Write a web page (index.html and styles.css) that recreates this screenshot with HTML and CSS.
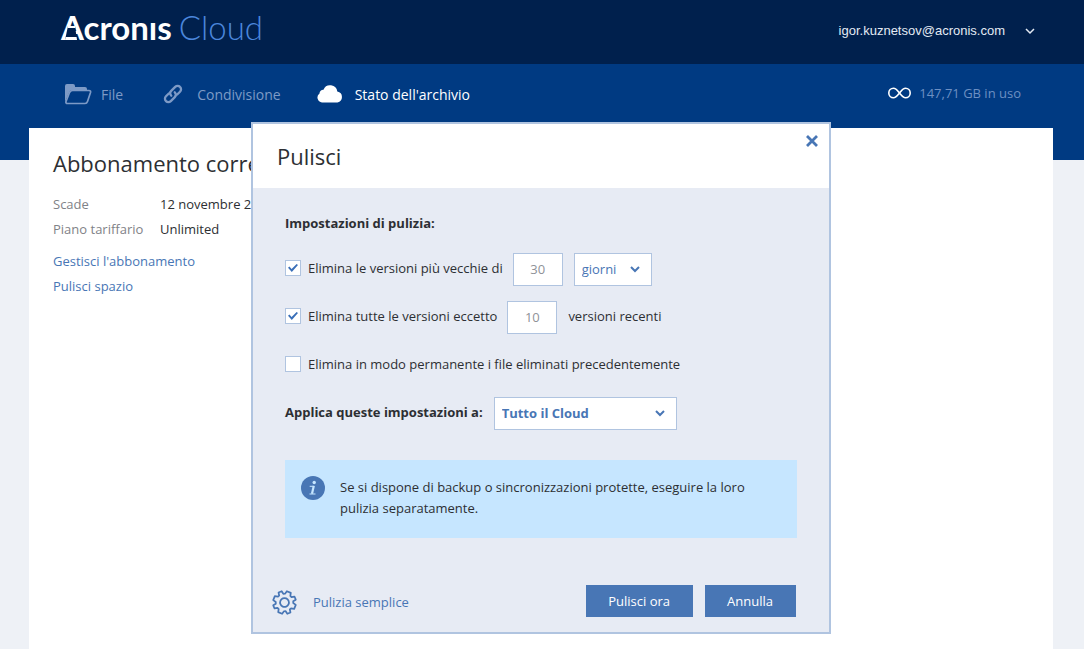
FILE: index.html
```
<!DOCTYPE html>
<html lang="it">
<head>
<meta charset="utf-8">
<meta name="viewport" content="width=device-width, initial-scale=1">
<title>Acronis Cloud</title>
<link rel="stylesheet" href="styles.css">
</head>
<body>
<header class="topbar">
  <div class="logo"><span class="logo-name">Acronıs</span><span class="logo-product">Cloud</span></div>
  <button class="account" type="button">
    <span>igor.kuznetsov@acronis.com</span>
    <svg class="chevron" width="10" height="7" viewBox="0 0 10 7"><path d="M1 1l4 4 4-4"/></svg>
  </button>
</header>

<div class="navband">
  <nav class="nav">
    <a class="nav-item nav-file" href="#">
      <svg width="27" height="21" viewBox="0 0 27 21"><path fill="currentColor" d="M0 18V2Q0 0 2 0H8Q10 0 10 2V3H20Q22 3 22 5V6H7Q5 6 4.300 8Z"/><path fill="none" stroke="currentColor" stroke-width="1.700" stroke-linejoin="round" d="M7.500 6.500H24Q26 6.500 25.500 8.500L22.500 17.500Q21.800 19.500 20 19.500H2.500Q.5 19.500 1 17.500L4.500 8.500Q5.500 6.500 7.500 6.500Z"/></svg>
      <span>File</span>
    </a>
    <a class="nav-item nav-share" href="#">
      <svg width="20" height="20" viewBox="0 0 20 20"><g fill="none" stroke="currentColor" stroke-width="2.300" stroke-linecap="round"><path d="M8.300 11.700C6.800 10.200 6.900 8.200 8.200 6.900L12.200 2.900C13.600 1.500 15.700 1.500 17 2.900C18.400 4.200 18.400 6.300 17 7.700L14.200 10.500"/><path d="M11.700 8.300C13.200 9.800 13.100 11.800 11.800 13.100L7.800 17.100C6.400 18.500 4.300 18.500 3 17.100C1.600 15.800 1.600 13.700 3 12.300L5.800 9.500"/></g></svg>
      <span>Condivisione</span>
    </a>
    <a class="nav-item nav-status active" href="#" aria-current="page">
      <svg width="26" height="18" viewBox="0 0 26 18"><path fill="currentColor" d="M5 17.500A5 5 0 0 1 2.500 8.500A3.800 3.800 0 0 1 6.500 4.700A7.200 7.200 0 0 1 20.300 6.500A5.600 5.600 0 0 1 20.500 17.500Z"/></svg>
      <span>Stato dell'archivio</span>
    </a>
  </nav>
  <div class="usage">
    <svg width="23" height="12" viewBox="0 0 23 12"><path fill="none" stroke="#fff" stroke-width="1.600" d="M11.500 6C9.500 3.500 8.200 1.200 5.500 1.200A4.700 4.800 0 0 0 5.500 10.800C8.200 10.800 9.500 8.500 11.500 6S14.800 1.200 17.500 1.200A4.700 4.800 0 0 1 17.500 10.800C14.800 10.800 13.500 8.500 11.500 6Z"/></svg>
    <span>147,71 GB in uso</span>
  </div>
</div>

<main class="content">
  <h1 class="title">Abbonamento corrente</h1>
  <dl class="details">
    <dt>Scade</dt><dd>12 novembre 2016</dd>
    <dt>Piano tariffario</dt><dd>Unlimited</dd>
  </dl>
  <a class="link" href="#">Gestisci l'abbonamento</a>
  <a class="link" href="#">Pulisci spazio</a>
</main>

<div class="overlay">
  <form class="dialog" role="dialog" aria-labelledby="dialog-title">
    <div class="dialog-head">
      <h2 class="title" id="dialog-title">Pulisci</h2>
      <button class="close" type="button" aria-label="Chiudi">
        <svg width="12" height="12" viewBox="0 0 12 12"><path fill="none" stroke="#4876b5" stroke-width="2.800" d="M1 1l10 10M11 1L1 11"/></svg>
      </button>
    </div>
    <div class="dialog-body">
      <h3 class="subtitle">Impostazioni di pulizia:</h3>
      <div class="rows">
        <div class="row">
          <input class="check" type="checkbox" id="older" checked>
          <label class="row-label" for="older">Elimina le versioni più vecchie di</label>
          <input class="number" type="text" value="30" aria-label="Numero di giorni">
          <div class="select unit">
            <select aria-label="Unità di tempo"><option>giorni</option></select>
            <svg class="chevron" width="10" height="7" viewBox="0 0 10 7"><path d="M1 1l4 4 4-4"/></svg>
          </div>
        </div>
        <div class="row">
          <input class="check" type="checkbox" id="except" checked>
          <label class="row-label" for="except">Elimina tutte le versioni eccetto</label>
          <input class="number" type="text" value="10" id="recent" aria-label="Numero di versioni">
          <label class="row-label" for="recent">versioni recenti</label>
        </div>
        <div class="row">
          <input class="check" type="checkbox" id="permanent">
          <label class="row-label" for="permanent">Elimina in modo permanente i file eliminati precedentemente</label>
        </div>
        <div class="row">
          <label class="row-label strong" for="scope">Applica queste impostazioni a:</label>
          <div class="select scope">
            <select id="scope"><option>Tutto il Cloud</option></select>
            <svg class="chevron" width="10" height="7" viewBox="0 0 10 7"><path d="M1 1l4 4 4-4"/></svg>
          </div>
        </div>
      </div>
      <div class="info">
        <svg width="24" height="24" viewBox="0 0 24 24"><circle cx="12" cy="12" r="12" fill="#4876b5"/><circle cx="13.200" cy="6.500" r="1.700" fill="#c6e6ff"/><path fill="none" stroke="#c6e6ff" stroke-width="1" d="M8.700 10.300H12M8.500 18H14.500"/><path fill="none" stroke="#c6e6ff" stroke-width="2.200" d="M12.800 9.800L11 17.800"/></svg>
        <p>Se si dispone di backup o sincronizzazioni protette, eseguire la loro pulizia separatamente.</p>
      </div>
    </div>
    <div class="dialog-foot">
      <a class="simple" href="#">
        <svg width="25" height="25" viewBox="-13 -13 26 26"><g fill="none" stroke="#4876b5" stroke-width="1.800" stroke-linejoin="round" transform="rotate(22.500)"><path d="M-2.200 -11.800H2.200L3 -8.600L4.600 -7.900L7.200 -9.700L9.700 -7.200L7.900 -4.600L8.600 -3L11.800 -2.200V2.200L8.600 3L7.900 4.600L9.700 7.200L7.200 9.700L4.600 7.900L3 8.600L2.200 11.800H-2.200L-3 8.600L-4.600 7.900L-7.200 9.700L-9.700 7.200L-7.900 4.600L-8.600 3L-11.800 2.200V-2.200L-8.600 -3L-7.900 -4.600L-9.700 -7.200L-7.200 -9.700L-4.600 -7.900L-3 -8.600Z"/><circle r="4.600"/></g></svg>
        <span>Pulizia semplice</span>
      </a>
      <button class="btn" type="submit">Pulisci ora</button>
      <button class="btn" type="button">Annulla</button>
    </div>
  </form>
</div>
</body>
</html>
```

FILE: styles.css
```
* { box-sizing: border-box; }

body {
  margin: 0;
  min-height: 100vh;
  display: flex;
  flex-direction: column;
  background: #eef1f6;
  color: #2d2f33;
  font: 13px/21px "Open Sans", "Noto Sans", sans-serif;
}

a { color: #4876b5; text-decoration: none; }
button, input, select { font: inherit; }
svg { display: block; flex: none; }

.topbar {
  display: flex;
  justify-content: space-between;
  height: 64px;
  padding: 0 49px 0 61px;
  background: #00204d;
}

.logo {
  display: flex;
  gap: 7px;
  position: relative;
  font: 33px/55px Lato, sans-serif;
}
.logo-name { color: #fff; font-weight: 700; }
.logo-product { color: #4b86dc; font-weight: 300; }

/* Split crossbar of the logo's first letter */
.logo::before {
  content: "";
  position: absolute;
  left: 4px;
  top: 26px;
  width: 12px;
  height: 9px;
  border: solid #fff;
  border-width: 2px 0 3px;
  background: #00204d;
  clip-path: polygon(3px 0, 10px 0, 100% 100%, 0 100%);
}

.account {
  display: flex;
  align-items: center;
  gap: 20px;
  height: 62px;
  padding: 0;
  border: 0;
  background: none;
  color: #e3eaf4;
  font: 13px/20px "Liberation Sans", Arial, sans-serif;
}

.chevron { fill: none; stroke: #4876b5; stroke-width: 2; }
.account .chevron { stroke: #e3eaf4; stroke-width: 1.5; }

.navband {
  display: flex;
  justify-content: space-between;
  height: 96px;
  padding: 0 63px 0 65px;
  background: #003a82;
}
.nav, .usage { display: flex; align-items: center; height: 60px; }
.nav { gap: 40px; font-size: 14px; }
.nav-item { display: flex; align-items: center; color: #7d9ac6; }
.nav-file { gap: 9px; }
.nav-share { gap: 14px; }
.nav-status { gap: 12px; margin-left: -4px; }
.nav-item.active { color: #fff; }
.usage { gap: 8px; height: 58px; color: #6d90c3; }

.content {
  flex: 1;
  display: flex;
  flex-direction: column;
  align-items: flex-start;
  margin: -32px 31px 0 29px;
  padding: 19px 24px;
  background: #fff;
}
.title { margin: 0; font-size: 22px; line-height: 32px; font-weight: 400; }
.details {
  display: grid;
  grid-template-columns: 107px auto;
  row-gap: 4px;
  margin: 15px 0 11px;
}
.details dt { color: #7f8287; }
.details dd { margin: 0; }
.link { margin-bottom: 4px; }

.overlay {
  position: absolute;
  inset: 122px 0 auto 0;
  display: flex;
  justify-content: center;
  padding-right: 2px;
}
.dialog {
  width: 580px;
  background: #e7ebf4;
  border: 2px solid #b0c4e0;
}
.dialog-head {
  display: flex;
  justify-content: space-between;
  align-items: flex-start;
  padding: 16px 11px 16px 24px;
  background: #fff;
}
.close { padding: 0; border: 0; background: none; margin-top: -5px; }

.dialog-body { padding: 25px 32px 0; }
.subtitle { margin: 0 0 19px; font-size: 13px; font-weight: 700; }
.rows { display: grid; gap: 15px; }
.row { display: flex; align-items: center; height: 33px; }
.row-label { padding-bottom: 2px; }
.strong { font-weight: 700; margin-right: 11px; }

.check {
  appearance: none;
  display: grid;
  place-items: center;
  width: 16px;
  height: 16px;
  margin: 0 7px 3px 0;
  border: 1px solid #b0c4e0;
  background: #fff;
}
.check:checked::before {
  content: "";
  width: 10px;
  height: 8px;
  background: #3a6fb8;
  clip-path: polygon(0 48%, 14% 32%, 36% 62%, 86% 0, 100% 14%, 38% 100%);
}

.number {
  width: 50px;
  height: 33px;
  margin: 0 11px 0 10px;
  padding: 0 0 1px;
  border: 1px solid #b0c4e0;
  background: #fff;
  color: #8f9298;
  text-align: center;
}

.select {
  display: grid;
  grid-template-columns: 1fr 10px;
  align-items: center;
  height: 33px;
  padding-right: 11px;
  border: 1px solid #b0c4e0;
  background: #fff;
}
.select select {
  appearance: none;
  grid-area: 1 / 1 / 2 / 3;
  height: 31px;
  padding: 0 7px;
  border: 0;
  background: none;
  color: #4876b5;
}
.select .chevron { grid-area: 1 / 2; pointer-events: none; }
.unit { width: 78px; }
.scope { width: 183px; font-weight: 700; }

.info {
  display: flex;
  gap: 15px;
  min-height: 78px;
  margin-top: 30px;
  padding: 16px 48px 16px 16px;
  background: #c6e6ff;
}
.info p { margin: 1px 0 0; }

.dialog-foot {
  display: flex;
  align-items: center;
  gap: 12px;
  padding: 47px 33px 15px 19px;
}
.simple { display: flex; align-items: center; gap: 16px; margin-right: auto; padding-top: 2px; }
.btn {
  height: 32px;
  padding: 0 23px 0 22px;
  border: 0;
  background: #4876b5;
  color: #fff;
}
```
